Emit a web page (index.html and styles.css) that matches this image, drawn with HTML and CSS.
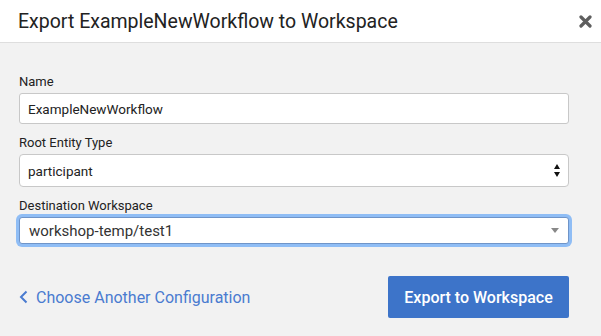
FILE: index.html
```html
<!DOCTYPE html>
<html lang="en">
<head>
  <meta charset="UTF-8">
  <title>Export to Workspace</title>
  <link rel="stylesheet" href="styles.css">
</head>
<body>
  <div class="modal">
    <div class="modal-header">
      <h1>Export ExampleNewWorkflow to Workspace</h1>
      <button class="close" aria-label="Close">
        <svg width="13" height="13" viewBox="0 0 13 13">
          <path d="M2 2 L11 11 M11 2 L2 11" stroke="#5e5e5e" stroke-width="3.2" stroke-linecap="round"/>
        </svg>
      </button>
    </div>
    <div class="modal-body">
      <div class="field">
        <label for="name">Name</label>
        <input type="text" id="name" class="text-input" value="ExampleNewWorkflow">
      </div>
      <div class="field">
        <label for="root">Root Entity Type</label>
        <div class="native-select">
          <span>participant</span>
          <svg width="6" height="13" viewBox="0 0 6 13">
            <path d="M3 0 L6 5 L0 5 Z M3 13 L6 8 L0 8 Z" fill="#111"/>
          </svg>
        </div>
      </div>
      <div class="field">
        <label>Destination Workspace</label>
        <div class="combo-select">
          <span>workshop-temp/test1</span>
          <svg width="8" height="5" viewBox="0 0 8 5">
            <path d="M0 0 L8 0 L4 5 Z" fill="#888"/>
          </svg>
        </div>
      </div>
      <div class="actions">
        <a href="#" class="back-link">
          <svg width="9" height="14" viewBox="0 0 9 14">
            <path d="M7.5 1.5 L2 7 L7.5 12.5" fill="none" stroke="#4a7bd0" stroke-width="2"/>
          </svg>
          Choose Another Configuration
        </a>
        <button class="primary">Export to Workspace</button>
      </div>
    </div>
  </div>
</body>
</html>
```

FILE: styles.css
```css
/* General Styles */
body {
  margin: 0;
  font-family: Roboto, 'Liberation Sans', sans-serif;
  background: #f2f2f2;
  color: #222;
}

.modal {
  width: 601px;
  height: 336px;
  background: #f2f2f2;
}

.modal-header {
  display: flex;
  justify-content: space-between;
  align-items: center;
  height: 42px;
  padding: 0 9px 0 18px;
  background: #fff;
  border-bottom: 1px solid #dedede;
}

h1 {
  margin: 0;
  font-size: 19.5px;
  font-weight: 400;
  color: #222;
}

.close {
  border: none;
  background: none;
  padding: 0;
  width: 13px;
  height: 13px;
  cursor: pointer;
  display: flex;
}

.modal-body {
  padding: 31px 32px 0 19px;
}

.field {
  margin-bottom: 11px;
}

label {
  display: block;
  font-size: 13px;
  color: #222;
  margin-bottom: 3px;
  line-height: 16px;
}

.text-input {
  box-sizing: border-box;
  width: 550px;
  height: 31px;
  padding: 0 8px;
  border: 1px solid #c8c8c8;
  border-radius: 3px;
  font-family: inherit;
  font-size: 13.5px;
  color: #222;
  background: #fff;
  outline: none;
}

.native-select {
  box-sizing: border-box;
  width: 550px;
  height: 33px;
  display: flex;
  justify-content: space-between;
  align-items: center;
  padding: 0 8px 0 8px;
  border: 1px solid #c8c8c8;
  border-radius: 4px;
  background: #fff;
  font-size: 13.5px;
}

.combo-select {
  box-sizing: border-box;
  width: 550px;
  height: 27px;
  display: flex;
  justify-content: space-between;
  align-items: center;
  padding: 0 9px 0 9px;
  border: 1px solid #6f94c8;
  border-radius: 3px;
  background: #fff;
  box-shadow: 0 0 0 3px #8fbdf5;
  font-size: 15px;
  color: #333;
}

.actions {
  display: flex;
  justify-content: space-between;
  align-items: center;
  margin-top: 32px;
}

.back-link {
  display: flex;
  align-items: center;
  gap: 8px;
  font-size: 16px;
  color: #4a7bd0;
  text-decoration: none;
}

.primary {
  width: 181px;
  height: 42px;
  border: none;
  border-radius: 2px;
  background: #3d74c9;
  color: #fff;
  font-family: inherit;
  font-size: 16px;
  font-weight: 500;
  cursor: pointer;
}
```
